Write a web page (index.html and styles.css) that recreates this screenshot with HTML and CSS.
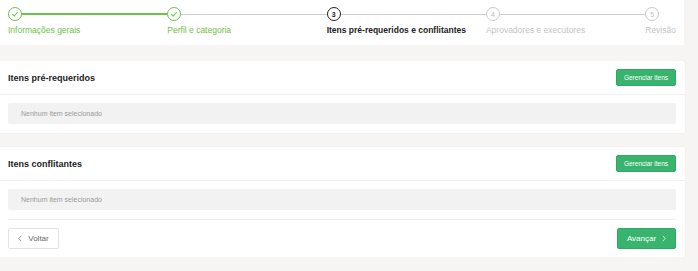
FILE: index.html
```html
<!DOCTYPE html>
<html lang="pt-BR">
<head>
  <meta charset="UTF-8">
  <title>Itens pré-requeridos e conflitantes</title>
  <link rel="stylesheet" href="styles.css">
</head>
<body>
<div class="page">
  <div class="stepper">
    <div class="step done">
      <div class="track">
        <span class="dot"><svg viewBox="0 0 10 10" width="8" height="8"><path d="M1.5 5.2 L4 7.5 L8.5 2.5" fill="none" stroke="currentColor" stroke-width="1.3"/></svg></span>
        <span class="line green"></span>
      </div>
      <span class="label">Informações gerais</span>
    </div>
    <div class="step done">
      <div class="track">
        <span class="dot"><svg viewBox="0 0 10 10" width="8" height="8"><path d="M1.5 5.2 L4 7.5 L8.5 2.5" fill="none" stroke="currentColor" stroke-width="1.3"/></svg></span>
        <span class="line"></span>
      </div>
      <span class="label">Perfil e categoria</span>
    </div>
    <div class="step current">
      <div class="track">
        <span class="dot">3</span>
        <span class="line"></span>
      </div>
      <span class="label">Itens pré-requeridos e conflitantes</span>
    </div>
    <div class="step">
      <div class="track">
        <span class="dot">4</span>
        <span class="line"></span>
      </div>
      <span class="label">Aprovadores e executores</span>
    </div>
    <div class="step last">
      <div class="track">
        <span class="dot">5</span>
      </div>
      <span class="label">Revisão</span>
    </div>
  </div>

  <div class="card">
    <div class="card-head">
      <h2>Itens pré-requeridos</h2>
      <button class="btn-green small">Gerenciar itens</button>
    </div>
    <div class="card-body">
      <div class="empty">Nenhum item selecionado</div>
    </div>
  </div>

  <div class="card">
    <div class="card-head">
      <h2>Itens conflitantes</h2>
      <button class="btn-green small">Gerenciar itens</button>
    </div>
    <div class="card-body">
      <div class="empty">Nenhum item selecionado</div>
    </div>
    <div class="card-foot">
      <button class="btn-outline"><svg class="chev" viewBox="0 0 6 10" width="4" height="7"><path d="M4.8 1 L1.2 5 L4.8 9" fill="none" stroke="currentColor" stroke-width="1"/></svg>Voltar</button>
      <button class="btn-green big">Avançar<svg class="chev right" viewBox="0 0 6 10" width="4" height="7"><path d="M1.2 1 L4.8 5 L1.2 9" fill="none" stroke="currentColor" stroke-width="1.1"/></svg></button>
    </div>
  </div>
</div>
</body>
</html>
```

FILE: styles.css
```css
body {
  margin: 0;
  background: #f6f5f3;
  font-family: "Liberation Sans", Arial, sans-serif;
}

.page {
  width: 685px;
}

/* stepper */
.stepper {
  display: flex;
  background: #fff;
  height: 45px;
  box-sizing: border-box;
  padding: 7px 8px 0 8px;
  width: 684px;
}
.step {
  width: 160px;
  display: flex;
  flex-direction: column;
}
.step.last {
  width: auto;
  flex: 1;
  align-items: flex-start;
}
.track {
  display: flex;
  align-items: center;
  height: 14px;
}
.dot {
  width: 12px;
  height: 12px;
  border: 1px solid #c9c9c9;
  border-radius: 50%;
  display: flex;
  align-items: center;
  justify-content: center;
  font-size: 7px;
  color: #bbb;
  flex: none;
}
.line {
  flex: 1;
  height: 1px;
  background: #cfcfcf;
}
.line.green {
  background: #6cc24a;
  height: 1.5px;
}
.label {
  margin-top: 4px;
  font-size: 8.5px;
  color: #c4c4c4;
  white-space: nowrap;
}
.step.done .dot {
  border-color: #6cc24a;
  color: #6cc24a;
}
.step.done .label {
  color: #6cc24a;
}
.step.current .dot {
  border-color: #222;
  color: #222;
  font-weight: bold;
}
.step.current .label {
  color: #1d1d1d;
  font-weight: bold;
}

/* cards */
.card {
  background: #fff;
  border-radius: 0 3px 3px 0;
  box-shadow: 0 0 2px rgba(0, 0, 0, 0.06);
  margin-top: 16px;
}
.card + .card {
  margin-top: 14px;
}
.card-head {
  display: flex;
  justify-content: space-between;
  align-items: center;
  height: 33px;
  padding: 0 9px 0 8px;
  border-bottom: 1px solid #f1f1f1;
}
.card-head h2 {
  margin: 0;
  font-size: 9px;
  font-weight: bold;
  color: #1c1c1c;
}
.card-body {
  padding: 8px 9px 9px 8px;
}
.empty {
  background: #f2f2f3;
  height: 21px;
  border-radius: 2px;
  padding-left: 13px;
  display: flex;
  align-items: center;
  font-size: 7px;
  color: #9a9a9a;
}
.card-foot {
  display: flex;
  justify-content: space-between;
  align-items: center;
  margin: 0 9px 0 8px;
  padding: 8px 0;
  border-top: 1px solid #efefef;
}

/* buttons */
button {
  font-family: inherit;
  cursor: pointer;
  display: inline-flex;
  align-items: center;
  justify-content: center;
}
.chev {
  margin-right: 6px;
}
.chev.right {
  margin-right: 0;
  margin-left: 6px;
}
.btn-green {
  background: #38b46f;
  color: #fff;
  border: 1px solid #31a865;
  border-radius: 2px;
}
.btn-green.small {
  width: 60px;
  height: 17px;
  font-size: 6.5px;
  padding: 0;
}
.btn-green.big {
  width: 59px;
  height: 21px;
  font-size: 8px;
  padding: 0;
}
.btn-outline {
  width: 51px;
  height: 21px;
  background: #fff;
  border: 1px solid #e3e3e3;
  border-radius: 2px;
  color: #6b6b6b;
  font-size: 8px;
  padding: 0;
}
```
